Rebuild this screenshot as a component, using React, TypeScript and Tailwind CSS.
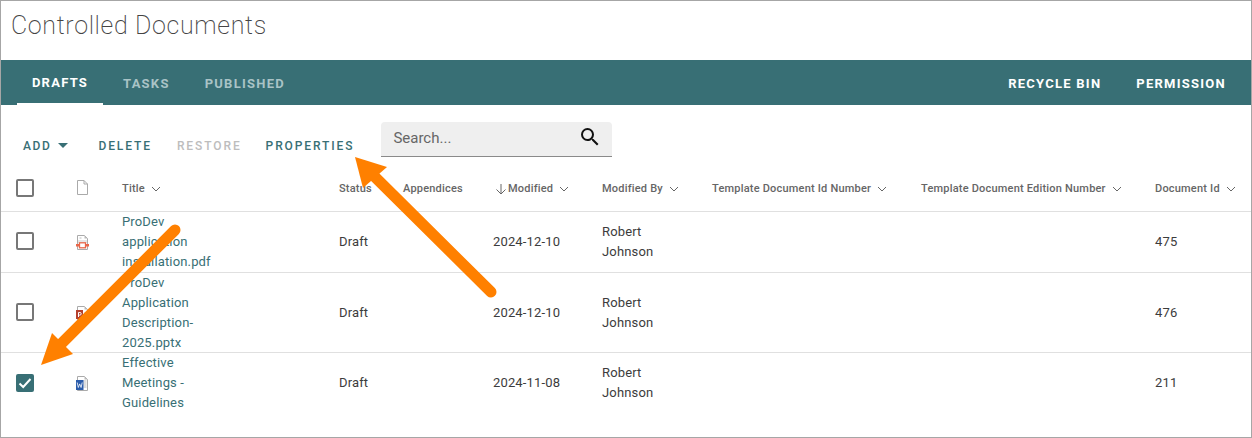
const teal = "#386f75";

function Chevron() {
  return (
    <svg width="10" height="6" viewBox="0 0 10 6" fill="none" stroke="#666" strokeWidth="1" className="ml-[6px] shrink-0">
      <path d="M1 1l4 4 4-4" />
    </svg>
  );
}

function SortArrow() {
  return (
    <svg width="12" height="12" viewBox="0 0 12 12" fill="none" stroke="#666" strokeWidth="1" className="ml-[2px] mr-px shrink-0">
      <path d="M6 1v10M1.5 6.5L6 11l4.5-4.5" />
    </svg>
  );
}

function Checkbox({ checked, up }: { checked?: boolean; up?: string }) {
  if (checked) {
    return (
      <div className="-ml-px w-[18px] h-[18px] rounded-[2px] bg-[#386f75] flex items-center justify-center">
        <svg width="14" height="12" viewBox="0 0 14 12" fill="none" stroke="#fff" strokeWidth="2">
          <path d="M1.5 6.5l3.7 3.5L12.5 2" />
        </svg>
      </div>
    );
  }
  return <div className={`-ml-px w-[18px] h-[18px] rounded-[2px] border-2 border-[#777] ${up ?? ""}`} />;
}

function BlankFile() {
  return (
    <svg width="13" height="17" viewBox="0 0 13 17" fill="#fff" stroke="#aaa" strokeWidth="1" className="mb-[2px] ml-px">
      <path d="M1.5 1.5h6.5l3.5 3.5v10.5h-10z" />
      <path d="M8 1.5v3.5h3.5" fill="none" />
    </svg>
  );
}

function PageBase() {
  return (
    <>
      <path d="M2.5 1.5h7l3 3v11h-10z" fill="#fff" stroke="#aaa" strokeWidth="1" />
      <path d="M9.5 1.5v3h3z" fill="#bbb" />
    </>
  );
}

function PdfIcon() {
  return (
    <svg width="15" height="17" viewBox="0 0 15 17" className="mt-px">
      <PageBase />
      <path d="M4.5 4h2" stroke="#bbb" strokeWidth="1" />
      <rect x="3" y="6" width="9" height="3" fill="#e6e6e6" />
      <rect x="1" y="10" width="13" height="2.5" fill="#e8674a" />
      <rect x="4.5" y="8.8" width="6" height="5" fill="#fff" stroke="#e8674a" strokeWidth="1.3" />
    </svg>
  );
}

function PptIcon() {
  return (
    <svg width="15" height="17" viewBox="0 0 15 17">
      <PageBase />
      <path d="M9 8h3M9 10h3M9 12h3" stroke="#ccc" strokeWidth="1" />
      <rect x="1" y="5" width="7" height="9" fill="#b5402d" />
      <path d="M3.5 12V7.5h1.4a1.2 1.2 0 0 1 0 2.6H3.5" fill="none" stroke="#fff" strokeWidth="1" />
    </svg>
  );
}

function WordIcon() {
  return (
    <svg width="15" height="17" viewBox="0 0 15 17">
      <PageBase />
      <path d="M8.5 6h3M8.5 8h3M8.5 10h3M8.5 12h3" stroke="#bbb" strokeWidth="1" />
      <rect x="1" y="5" width="7.5" height="10" fill="#2b5cab" />
      <path d="M2.2 7.5l1.1 5 1.4-3.6 1.4 3.6 1.1-5" fill="none" stroke="#fff" strokeWidth="0.8" />
    </svg>
  );
}

const grid =
  "grid grid-cols-[58px_47px_217px_64px_90px_109px_110px_209px_234px_1fr] pl-4 items-center";

function Head({ label, chevron = true, sorted }: { label: string; chevron?: boolean; sorted?: boolean }) {
  return (
    <div className="flex items-center mt-px text-[11px] font-medium tracking-[0.2px] text-[#666] whitespace-nowrap">
      {sorted && <SortArrow />}
      <span>{label}</span>
      {chevron && <Chevron />}
    </div>
  );
}

type RowData = {
  lines: string[];
  icon: React.ReactNode;
  date: string;
  id: string;
  checked?: boolean;
  height: string;
  border: string;
  up?: string;
};

const rows: RowData[] = [
  { lines: ["ProDev", "application", "installation.pdf"], icon: <PdfIcon />, date: "2024-12-10", id: "475", height: "h-[61px]", border: "border-b border-[#e0e0e0]", up: "mb-[2px]" },
  { lines: ["ProDev", "Application", "Description-", "2025.pptx"], icon: <PptIcon />, date: "2024-12-10", id: "476", height: "h-[80px]", border: "border-b border-[#e0e0e0]", up: "mb-[2px]" },
  { lines: ["Effective", "Meetings -", "Guidelines"], icon: <WordIcon />, date: "2024-11-08", id: "211", checked: true, height: "h-[60px]", border: "" },
];

function Row({ r }: { r: RowData }) {
  return (
    <div className={`${grid} ${r.height} ${r.border} text-[13px] leading-5 tracking-[0.15px] text-[#3c3c3c]`}>
      <Checkbox checked={r.checked} up={r.up} />
      <div className="flex">{r.icon}</div>
      <div className="text-[#386f75]">
        {r.lines.map((l) => (
          <div key={l}>{l}</div>
        ))}
      </div>
      <div>Draft</div>
      <div />
      <div>{r.date}</div>
      <div>
        <div>Robert</div>
        <div>Johnson</div>
      </div>
      <div />
      <div />
      <div>{r.id}</div>
    </div>
  );
}

export default function App() {
  return (
    <div
      className="relative w-[1252px] h-[438px] bg-white border border-[#a6a6a6] overflow-hidden"
      style={{ fontFamily: "Roboto, sans-serif" }}
    >
      <h1 className="h-[59px] pl-[10px] pt-[8px] text-[25px] leading-[34px] font-extralight tracking-[0.65px] text-[#444]">
        Controlled Documents
      </h1>

      <nav className="h-[45px] bg-[#386f75] flex justify-between pl-4 pr-[25px] text-[13px] font-bold tracking-[1.25px]">
        <div className="flex">
          <div className="w-[86px] pt-[3px] flex items-center justify-center text-white border-b-2 border-white">DRAFTS</div>
          <div className="ml-[20px] pt-[2px] flex items-center text-[#a9c3c6]">TASKS</div>
          <div className="ml-[35px] pt-[2px] flex items-center text-[#a9c3c6]">PUBLISHED</div>
        </div>
        <div className="flex items-center gap-[35px] pt-[2px] text-white">
          <span>RECYCLE BIN</span>
          <span>PERMISSION</span>
        </div>
      </nav>

      <div className="h-[61px] flex items-start pl-[22px]">
        <div className="mt-[33px] flex items-center text-[12px] font-medium tracking-[1.9px] leading-4" style={{ color: teal }}>
          <span className="tracking-[1.6px]">ADD</span>
          <svg width="10" height="5" viewBox="0 0 10 5" className="ml-[7px] mb-[2px]">
            <path d="M0 0h10L5 5z" fill="#386f75" />
          </svg>
          <span className="ml-[30px]">DELETE</span>
          <span className="ml-[25px] text-[#bdbdbd]">RESTORE</span>
          <span className="ml-[24px]">PROPERTIES</span>
        </div>
        <div className="ml-[27px] mt-[17px] w-[231px] h-[35px] bg-[#efefef] rounded-t-[4px] border-b border-[#8a8a8a] flex items-center justify-between pl-3 pr-[10px]">
          <span className="text-[15px] text-[#666] mb-[2px]">Search...</span>
          <svg width="24" height="24" viewBox="0 0 24 24" fill="#111" className="mb-[4px]">
            <path d="M15.5 14h-.79l-.28-.27A6.471 6.471 0 0 0 16 9.5 6.5 6.5 0 1 0 9.5 16c1.61 0 3.09-.59 4.23-1.57l.27.28v.79l5 4.99L20.49 19l-4.99-5zm-6 0C7.01 14 5 11.99 5 9.5S7.01 5 9.5 5 14 7.01 14 9.5 11.99 14 9.5 14z" />
          </svg>
        </div>
      </div>

      <div className={`${grid} h-[46px] border-b border-[#e0e0e0]`}>
        <Checkbox up="mb-[2px]" />
        <div className="flex"><BlankFile /></div>
        <Head label="Title" />
        <Head label="Status" chevron={false} />
        <Head label="Appendices" chevron={false} />
        <Head label="Modified" sorted />
        <Head label="Modified By" />
        <Head label="Template Document Id Number" />
        <Head label="Template Document Edition Number" />
        <Head label="Document Id" />
      </div>

      {rows.map((r) => (
        <Row key={r.id} r={r} />
      ))}

      <svg width="1252" height="438" viewBox="0 0 1252 438" className="absolute -left-px -top-px pointer-events-none" fill="none">
        <path d="M175 230L60 345" stroke="#ff8000" strokeWidth="11" strokeLinecap="round" />
        <path d="M41 365L52 333L73 354z" fill="#ff8000" />
        <path d="M491 292L375 177" stroke="#ff8000" strokeWidth="11" strokeLinecap="round" />
        <path d="M355 157L387 167L363 188z" fill="#ff8000" />
      </svg>
    </div>
  );
}
